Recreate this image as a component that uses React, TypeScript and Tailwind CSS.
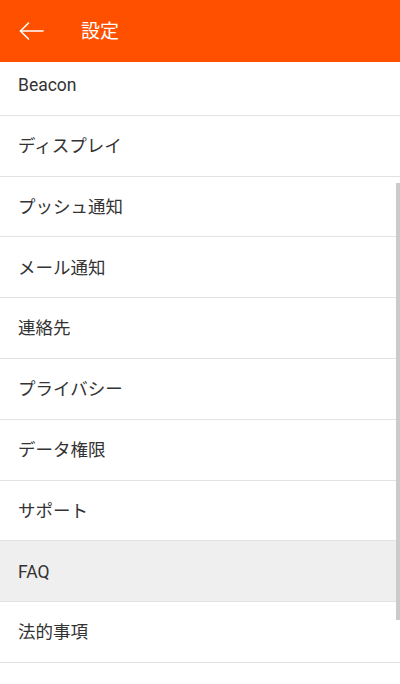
const ITEMS = [
  'Beacon',
  'ディスプレイ',
  'プッシュ通知',
  'メール通知',
  '連絡先',
  'プライバシー',
  'データ権限',
  'サポート',
  'FAQ',
  '法的事項',
]

export default function App() {
  return (
    <div
      className="w-[400px] h-[684px] flex flex-col bg-white overflow-hidden relative"
      style={{ fontFamily: 'Roboto, "Noto Sans CJK JP", sans-serif' }}
    >
      {/* Header */}
      <div className="h-[62px] shrink-0 bg-[#ff5000] flex items-center z-10">
        <button className="w-[62px] h-full flex items-center pl-[19px]">
          <svg width="25" height="18" viewBox="0 0 25 18" fill="none" stroke="white" strokeWidth="1.6" strokeLinecap="round" strokeLinejoin="round">
            <path d="M24 9H1.5" />
            <path d="M9.5 1L1.5 9l8 8" />
          </svg>
        </button>
        <span className="text-white text-[19px] ml-[19px] leading-none">設定</span>
      </div>

      {/* List */}
      <div className="flex-1 overflow-hidden">
        <div className="-mt-[7px]">
          {ITEMS.map((item) => (
            <div
              key={item}
              className={`h-[60.8px] flex items-center pl-[18px] pt-[1px] border-b border-[#e2e2e2] text-[17.5px] text-[#333333] ${
                item === 'FAQ' ? 'bg-[#efefef]' : 'bg-white'
              }`}
            >
              {item}
            </div>
          ))}
        </div>
      </div>

      {/* Scrollbar */}
      <div className="absolute right-0 top-[183px] w-[4px] h-[437px] bg-[#cbcbcb]" />
    </div>
  )
}
